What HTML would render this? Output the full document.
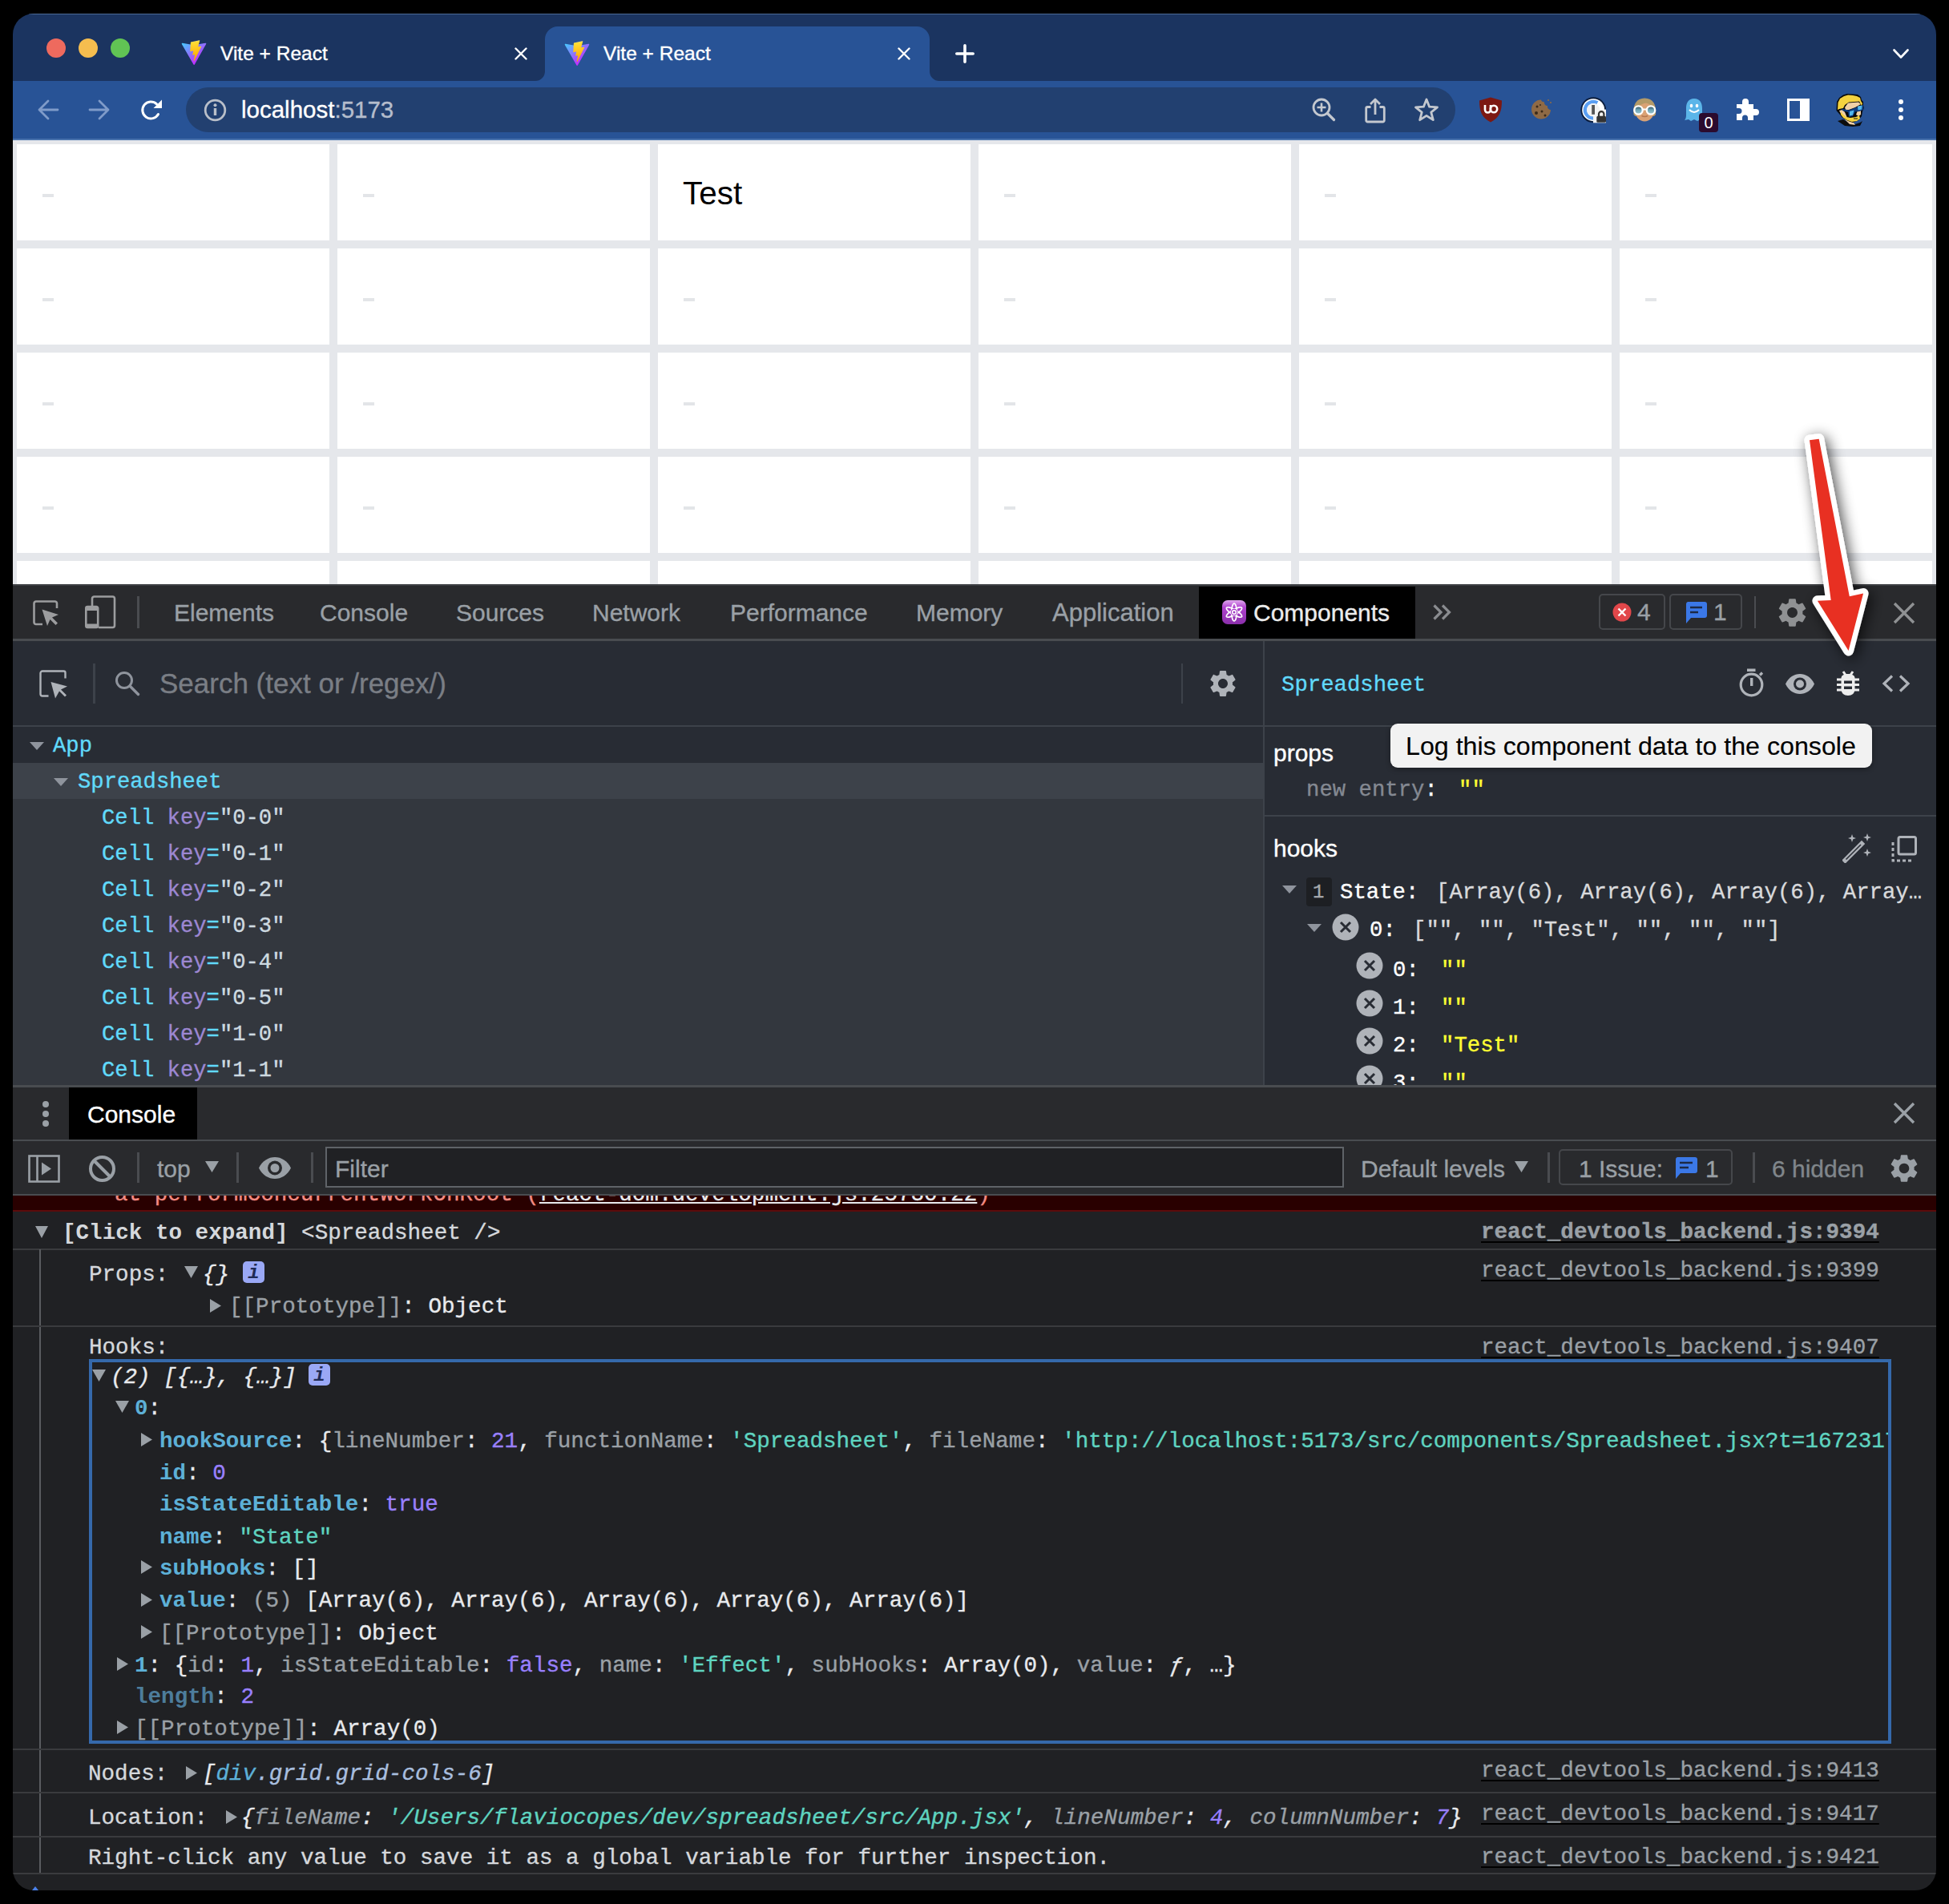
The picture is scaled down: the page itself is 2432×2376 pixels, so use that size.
<!DOCTYPE html>
<html><head><meta charset="utf-8">
<style>
html,body{margin:0;padding:0;}
body{width:2432px;height:2376px;background:#000;position:relative;overflow:hidden;font-family:"Liberation Sans",sans-serif;}
.a{position:absolute;}
#win{position:absolute;left:0;top:0;width:2432px;height:2376px;clip-path:inset(17px 16px 17px 16px round 26px);overflow:hidden;}
.mono{font-family:"Liberation Mono",monospace;}
.sans{font-family:"Liberation Sans",sans-serif;}
.nw{white-space:pre;-webkit-text-stroke:0.35px currentColor;}
b{-webkit-text-stroke-width:0;}
.ct{font-family:"Liberation Mono",monospace;font-size:27.6px;line-height:40px;height:40px;}
.dtab{top:750px;font-size:30px;line-height:30px;color:#9aa0a6;}
.tr{font-family:"Liberation Mono",monospace;font-size:27.2px;line-height:45px;height:45px;}
/* browser chrome */
#tabbar{left:16px;top:17px;width:2400px;height:84px;background:#1b3460;}
#tabtopline{left:16px;top:17px;width:2400px;height:1px;background:#4b6894;}
#toolbar{left:16px;top:101px;width:2400px;height:72px;background:#285396;}
#tbline{left:16px;top:173px;width:2400px;height:2px;background:#4a73ad;}
.tabtitle{font-size:24.5px;line-height:30px;color:#fff;}
#omni{left:232px;top:109px;width:1584px;height:56px;border-radius:28px;background:#224070;}
/* page */
#page{left:16px;top:175px;width:2400px;height:554px;background:#e5e7eb;}
.cell{position:absolute;background:#fff;width:390px;height:120px;}
.dash{position:absolute;left:32px;top:62px;width:14px;height:4px;background:#e3e5e8;}
</style></head>
<body>
<div id="win">
  <div class="a" id="tabbar"></div>
  <div class="a" id="tabtopline"></div>
  <!-- traffic lights -->
  <div class="a" style="left:58px;top:48px;width:24px;height:24px;border-radius:50%;background:#ee6a5e;"></div>
  <div class="a" style="left:98px;top:48px;width:24px;height:24px;border-radius:50%;background:#f5bd4f;"></div>
  <div class="a" style="left:138px;top:48px;width:24px;height:24px;border-radius:50%;background:#61c454;"></div>
  <!-- active tab -->
  <div class="a" style="left:680px;top:33px;width:480px;height:68px;background:#285396;border-radius:16px 16px 0 0;"></div>
  <svg class="a" style="left:668px;top:89px" width="12" height="12"><path d="M12 0 V12 H0 A12 12 0 0 0 12 0Z" fill="#285396"/></svg>
  <svg class="a" style="left:1160px;top:89px" width="12" height="12"><path d="M0 0 V12 H12 A12 12 0 0 1 0 0Z" fill="#285396"/></svg>
  <!-- vite icons -->
  <svg class="a" style="left:226px;top:50px" width="32" height="32" viewBox="0 0 410 404"><defs><linearGradient id="vg0" x1="6" y1="33" x2="235" y2="344" gradientUnits="userSpaceOnUse"><stop stop-color="#41D1FF"/><stop offset="1" stop-color="#BD34FE"/></linearGradient><linearGradient id="vg1" x1="194.65" y1="8.82" x2="236.08" y2="292.99" gradientUnits="userSpaceOnUse"><stop stop-color="#FFEA83"/><stop offset="0.083" stop-color="#FFDD35"/><stop offset="1" stop-color="#FFA800"/></linearGradient></defs><path d="M399.641 59.525L215.643 388.545C211.844 395.338 202.084 395.378 198.228 388.618L10.582 59.556C6.381 52.19 12.68 43.267 21.028 44.759L205.223 77.682C206.398 77.892 207.601 77.89 208.776 77.676L389.119 44.806C397.439 43.289 403.768 52.143 399.641 59.525Z" fill="url(#vg0)"/><path d="M292.965 1.574L156.801 28.255C154.563 28.694 152.906 30.59 152.771 32.866L144.395 174.33C144.198 177.662 147.258 180.248 150.51 179.498L188.42 170.749C191.967 169.931 195.172 173.055 194.443 176.622L183.18 231.775C182.422 235.487 185.907 238.661 189.532 237.56L212.947 230.446C216.577 229.344 220.065 232.527 219.297 236.242L201.398 322.875C200.278 328.294 207.486 331.249 210.492 326.603L212.5 323.5L323.454 102.072C325.312 98.365 322.108 94.137 318.036 94.923L279.014 102.454C275.347 103.161 272.227 99.746 273.262 96.158L298.731 7.867C299.767 4.273 296.636 0.855 292.965 1.574Z" fill="url(#vg1)"/></svg>
  <svg class="a" style="left:704px;top:51px" width="32" height="32" viewBox="0 0 410 404"><path d="M399.641 59.525L215.643 388.545C211.844 395.338 202.084 395.378 198.228 388.618L10.582 59.556C6.381 52.19 12.68 43.267 21.028 44.759L205.223 77.682C206.398 77.892 207.601 77.89 208.776 77.676L389.119 44.806C397.439 43.289 403.768 52.143 399.641 59.525Z" fill="url(#vg0)"/><path d="M292.965 1.574L156.801 28.255C154.563 28.694 152.906 30.59 152.771 32.866L144.395 174.33C144.198 177.662 147.258 180.248 150.51 179.498L188.42 170.749C191.967 169.931 195.172 173.055 194.443 176.622L183.18 231.775C182.422 235.487 185.907 238.661 189.532 237.56L212.947 230.446C216.577 229.344 220.065 232.527 219.297 236.242L201.398 322.875C200.278 328.294 207.486 331.249 210.492 326.603L212.5 323.5L323.454 102.072C325.312 98.365 322.108 94.137 318.036 94.923L279.014 102.454C275.347 103.161 272.227 99.746 273.262 96.158L298.731 7.867C299.767 4.273 296.636 0.855 292.965 1.574Z" fill="url(#vg1)"/></svg>
  <div class="a tabtitle nw" style="left:275px;top:52px;">Vite + React</div>
  <div class="a tabtitle nw" style="left:753px;top:52px;">Vite + React</div>
  <!-- close X -->
  <svg class="a" style="left:642px;top:59px" width="16" height="16"><path d="M1.5 1.5L14.5 14.5M14.5 1.5L1.5 14.5" stroke="#fff" stroke-width="2.4" stroke-linecap="round"/></svg>
  <svg class="a" style="left:1120px;top:59px" width="16" height="16"><path d="M1.5 1.5L14.5 14.5M14.5 1.5L1.5 14.5" stroke="#fff" stroke-width="2.4" stroke-linecap="round"/></svg>
  <!-- new tab + -->
  <svg class="a" style="left:1192px;top:55px" width="24" height="24"><path d="M12 1.8V22.2M1.8 12H22.2" stroke="#fff" stroke-width="3.6" stroke-linecap="round"/></svg>
  <!-- dropdown chevron -->
  <svg class="a" style="left:2362px;top:61px" width="20" height="14"><path d="M1.5 1.5L10 10.5L18.5 1.5" stroke="#fff" stroke-width="2.6" fill="none" stroke-linecap="round" stroke-linejoin="round"/></svg>

  <!-- toolbar -->
  <div class="a" id="toolbar"></div>
  <div class="a" id="tbline"></div>
  <div class="a" id="omni"></div>
  <!-- back / forward / reload -->
  <svg class="a" style="left:46px;top:123px" width="28" height="28"><path d="M26 14H3M14 3L3 14L14 25" stroke="#7f9bc9" stroke-width="2.8" fill="none" stroke-linecap="round" stroke-linejoin="round"/></svg>
  <svg class="a" style="left:110px;top:123px" width="28" height="28"><path d="M2 14H25M14 3L25 14L14 25" stroke="#7f9bc9" stroke-width="2.8" fill="none" stroke-linecap="round" stroke-linejoin="round"/></svg>
  <svg class="a" style="left:174px;top:123px" width="30" height="30"><path d="M23.5 19.5A10.5 10.5 0 1 1 21.5 6.8" stroke="#fff" stroke-width="3" fill="none" stroke-linecap="round"/><path d="M28 1.5V12H17.5Z" fill="#fff"/></svg>
  <!-- info -->
  <svg class="a" style="left:254px;top:123px" width="29" height="29"><circle cx="14.5" cy="14.5" r="12.3" stroke="#b9bfc9" stroke-width="2.8" fill="none"/><rect x="12.8" y="12" width="3.4" height="9" fill="#b9bfc9"/><circle cx="14.5" cy="8.3" r="2" fill="#b9bfc9"/></svg>
  <div class="a nw" style="left:301px;top:119px;font-size:29.5px;line-height:36px;color:#fff;">localhost<span style="color:#b5bdcc">:5173</span></div>
  <!-- zoom -->
  <svg class="a" style="left:1637px;top:122px" width="30" height="30"><circle cx="12" cy="12" r="10" stroke="#c4c8cf" stroke-width="2.8" fill="none"/><path d="M12 6.5V17.5M6.5 12H17.5" stroke="#c4c8cf" stroke-width="2.6"/><path d="M19.5 19.5L27.5 27.5" stroke="#c4c8cf" stroke-width="3.2" stroke-linecap="round"/></svg>
  <!-- share -->
  <svg class="a" style="left:1703px;top:122px" width="26" height="32"><path d="M7.5 11.5H3.5A1.8 1.8 0 0 0 1.7 13.3V28.2A1.8 1.8 0 0 0 3.5 30H22.5A1.8 1.8 0 0 0 24.3 28.2V13.3A1.8 1.8 0 0 0 22.5 11.5H18.5" stroke="#c4c8cf" stroke-width="2.8" fill="none"/><path d="M13 21V2.5M7 8L13 2L19 8" stroke="#c4c8cf" stroke-width="2.8" fill="none" stroke-linejoin="round"/></svg>
  <!-- star -->
  <svg class="a" style="left:1764px;top:121px" width="32" height="32"><path d="M16 3L19.6 12.2L29.5 12.8L21.8 19.1L24.3 28.7L16 23.3L7.7 28.7L10.2 19.1L2.5 12.8L12.4 12.2Z" stroke="#c4c8cf" stroke-width="2.8" fill="none" stroke-linejoin="round"/></svg>
  <!-- ublock -->
  <svg class="a" style="left:1845px;top:121px" width="30" height="32"><path d="M15 0.5L29 4.5C29 18 26 26 15 31.5C4 26 1 18 1 4.5Z" fill="#7c1812"/><path d="M8 10V16A3.5 3.5 0 0 0 15 16V10" stroke="#fff" stroke-width="2.6" fill="none"/><circle cx="19" cy="15" r="4.2" stroke="#fff" stroke-width="2.6" fill="none"/></svg>
  <!-- cookie -->
  <svg class="a" style="left:1909px;top:122px" width="30" height="30"><path d="M14 2.5A12 12 0 1 0 26 15A4 4 0 0 1 22 10A4 4 0 0 1 18 5A3 3 0 0 1 14 2.5Z" fill="#8f6a45"/><circle cx="9" cy="11" r="1.5" fill="#3a2a1a"/><circle cx="15" cy="17" r="1.5" fill="#3a2a1a"/><circle cx="8" cy="19" r="2" fill="#3a2a1a"/><circle cx="19" cy="22" r="1.5" fill="#3a2a1a"/><circle cx="13" cy="9" r="1" fill="#3a2a1a"/><circle cx="26" cy="6" r="1" fill="#8f6a45"/><circle cx="23" cy="3" r="1" fill="#8f6a45"/></svg>
  <!-- 1password -->
  <svg class="a" style="left:1971px;top:120px" width="35" height="35" viewBox="1971 120 35 35">
    <circle cx="1988.2" cy="137.2" r="15.9" fill="#0b1d3d"/>
    <circle cx="1988.2" cy="137.2" r="14" fill="#fff"/>
    <path d="M1993.35 128.28A10.3 10.3 0 1 0 1988.2 147.5" stroke="#5b9ff3" stroke-width="4.4" fill="none"/>
    <circle cx="1988.2" cy="137.2" r="8.1" fill="#f2f2f2"/>
    <rect x="1988" y="136.6" width="16" height="16.7" fill="#f4f4f4"/>
    <rect x="1986.2" y="131" width="3.8" height="11.8" fill="#555"/>
    <rect x="1992.3" y="144.8" width="11.7" height="8" rx="1.6" fill="#333"/>
    <path d="M1995 145.5V142.3A3.2 3.2 0 0 1 2001.4 142.3V145.5" stroke="#333" stroke-width="2.2" fill="none"/>
  </svg>
  <!-- face glasses -->
  <svg class="a" style="left:2036px;top:121px" width="33" height="33" viewBox="2036 121 33 33">
    <defs><linearGradient id="lens" x1="0" y1="0" x2="0" y2="1"><stop offset="0" stop-color="#24414d"/><stop offset="0.45" stop-color="#6fa5b5"/><stop offset="1" stop-color="#9cc8d4"/></linearGradient></defs>
    <path d="M2038.5 143C2037 131 2042 122.5 2052.2 122.5C2062.5 122.5 2067.5 131 2066 143L2064 145H2040.5Z" fill="#b39a69"/>
    <ellipse cx="2052.2" cy="140" rx="11.3" ry="11.4" fill="#d9a275"/>
    <path d="M2040.5 135C2041 127 2046 124 2052 124C2058.5 124 2063.5 127 2064 135C2061 130 2057 127.5 2054.5 127.5L2047 131Z" fill="#b39a69"/>
    <path d="M2048.5 144.5Q2052.2 146.5 2056 144.5" stroke="#b5774f" stroke-width="1.5" fill="none"/>
    <circle cx="2044.5" cy="137.5" r="5.2" fill="url(#lens)" stroke="#fff" stroke-width="2.3"/>
    <circle cx="2060" cy="137.5" r="5.2" fill="url(#lens)" stroke="#fff" stroke-width="2.3"/>
    <path d="M2049.7 136.5H2054.8" stroke="#fff" stroke-width="2.2"/>
  </svg>
  <!-- ghostery -->
  <svg class="a" style="left:2102px;top:122px" width="26" height="30"><path d="M12 1C5 1 2 6 2 13V22C2 25 1 27 0 28L5 27L8 29L12 27L16 29L20 27L24 28C23 26 22 24 22 22V13C22 6 19 1 12 1Z" fill="#5bb5e9"/><ellipse cx="8.5" cy="10" rx="1.8" ry="2.3" fill="#fff"/><ellipse cx="15.5" cy="10" rx="1.8" ry="2.3" fill="#fff"/><path d="M6 15Q12 21 18 15" stroke="#fff" stroke-width="2" fill="none"/></svg>
  <div class="a" style="left:2120px;top:141px;width:24px;height:24px;border-radius:4px;background:#2b0b2e;"></div>
  <div class="a mono" style="left:2120px;top:141px;width:24px;height:24px;line-height:24px;text-align:center;font-family:'Liberation Sans';font-size:20px;color:#fff;">0</div>
  <!-- puzzle -->
  <svg class="a" style="left:2165px;top:121px" width="31" height="30"><path d="M2 9H9V6A4 4 0 0 1 17 6V9H23V15H26A4 4 0 0 1 26 23H23V29H16V26A3.5 3.5 0 0 0 9 26V29H2V21H5A3.5 3.5 0 0 0 5 14H2Z" fill="#fff"/></svg>
  <!-- sidebar -->
  <svg class="a" style="left:2230px;top:123px" width="28" height="28"><rect x="1.5" y="1.5" width="25" height="25" stroke="#fff" stroke-width="3" fill="none"/><rect x="16" y="1" width="11" height="26" fill="#fff"/></svg>
  <!-- avatar -->
  <svg class="a" style="left:2285px;top:112px" width="50" height="50" viewBox="0 0 50 50">
    <path d="M8 39L15 37L22 41L30 43L36 41L39 39L36 45L27 46L17 45Z" fill="#0c0c0c"/>
    <path d="M17 37L23 43L30 44L28 41L20 36Z" fill="#efcfa6"/>
    <path d="M6.5 26L7 15L10 10L15 6.5L20 5L27 5.5L33 6L37 9L38 13L40 15L40 19L41 23L39 27L38 33L34 38L27 41L21 39L14 35L10 30Z" fill="#0a0a0a"/>
    <path d="M8 25L8.5 16L11 11L16 8L21 6.5L27 7L32 8L36 10L37 14L39 17L38 20L35 14.5L22 15.5L17 19L15 23L10 24Z" fill="#f4d23f"/>
    <path d="M17 22L21 16.5L34 15.5L37 18L30 22L22 25L18 25Z" fill="#efcfa6"/>
    <path d="M10 26L14 25L17 28L20 35L16 34L12 30Z" fill="#efcfa6"/>
    <path d="M33 26L37 25L37 31L34 33L31 31Z" fill="#efcfa6"/>
    <path d="M12 27L14 30L19 34L24 35L31 34L35 32L36 36L32 39L26 40L20 38L15 35L12 31Z" fill="#f4d23f"/>
    <path d="M13 23.5L22 25.5L30 22.5L40 19L40.5 25L35 27L30 27.5L27 33L22 34L21 28L14 26Z" fill="#0d3d80"/>
    <path d="M23 27L28.5 25.5L27 31.5L23 32.5Z" fill="#50b8f0"/>
    <path d="M33 20.5L38.5 19.5L38 24.5L33.5 25.5Z" fill="#50b8f0"/>
    <path d="M28 36H33" stroke="#111" stroke-width="1"/>
  </svg>
  <!-- menu dots -->
  <div class="a" style="left:2369px;top:124px;width:6px;height:6px;border-radius:50%;background:#fff;"></div>
  <div class="a" style="left:2369px;top:134px;width:6px;height:6px;border-radius:50%;background:#fff;"></div>
  <div class="a" style="left:2369px;top:144px;width:6px;height:6px;border-radius:50%;background:#fff;"></div>


  <!-- page -->
  <div class="a" id="page"></div>
  <div class="cell" style="left:21px;top:180px"><div class="dash"></div></div>
  <div class="cell" style="left:421px;top:180px"><div class="dash"></div></div>
  <div class="cell" style="left:821px;top:180px"><div class="a" style="left:31px;top:36px;font-size:40.5px;line-height:50px;color:#000;">Test</div></div>
  <div class="cell" style="left:1221px;top:180px"><div class="dash"></div></div>
  <div class="cell" style="left:1621px;top:180px"><div class="dash"></div></div>
  <div class="cell" style="left:2021px;top:180px"><div class="dash"></div></div>
  <div class="cell" style="left:21px;top:310px"><div class="dash"></div></div>
  <div class="cell" style="left:421px;top:310px"><div class="dash"></div></div>
  <div class="cell" style="left:821px;top:310px"><div class="dash"></div></div>
  <div class="cell" style="left:1221px;top:310px"><div class="dash"></div></div>
  <div class="cell" style="left:1621px;top:310px"><div class="dash"></div></div>
  <div class="cell" style="left:2021px;top:310px"><div class="dash"></div></div>
  <div class="cell" style="left:21px;top:440px"><div class="dash"></div></div>
  <div class="cell" style="left:421px;top:440px"><div class="dash"></div></div>
  <div class="cell" style="left:821px;top:440px"><div class="dash"></div></div>
  <div class="cell" style="left:1221px;top:440px"><div class="dash"></div></div>
  <div class="cell" style="left:1621px;top:440px"><div class="dash"></div></div>
  <div class="cell" style="left:2021px;top:440px"><div class="dash"></div></div>
  <div class="cell" style="left:21px;top:570px"><div class="dash"></div></div>
  <div class="cell" style="left:421px;top:570px"><div class="dash"></div></div>
  <div class="cell" style="left:821px;top:570px"><div class="dash"></div></div>
  <div class="cell" style="left:1221px;top:570px"><div class="dash"></div></div>
  <div class="cell" style="left:1621px;top:570px"><div class="dash"></div></div>
  <div class="cell" style="left:2021px;top:570px"><div class="dash"></div></div>
  <div class="cell" style="left:21px;top:700px"><div class="dash"></div></div>
  <div class="cell" style="left:421px;top:700px"><div class="dash"></div></div>
  <div class="cell" style="left:821px;top:700px"><div class="dash"></div></div>
  <div class="cell" style="left:1221px;top:700px"><div class="dash"></div></div>
  <div class="cell" style="left:1621px;top:700px"><div class="dash"></div></div>
  <div class="cell" style="left:2021px;top:700px"><div class="dash"></div></div>

  <!-- ===== DEVTOOLS main toolbar ===== -->
  <div class="a" style="left:16px;top:729px;width:2400px;height:2px;background:#3c3e42;"></div>
  <div class="a" style="left:16px;top:731px;width:2400px;height:66px;background:#292a2d;"></div>
  <div class="a" style="left:16px;top:797px;width:2400px;height:3px;background:#494c50;"></div>
  <!-- inspect icon -->
  <svg class="a" style="left:40px;top:748px" width="36" height="36"><path d="M13 31H5A2.5 2.5 0 0 1 2.5 28.5V5A2.5 2.5 0 0 1 5 2.5H28.5A2.5 2.5 0 0 1 31 5V11" stroke="#9c9d9f" stroke-width="2.6" fill="none"/><path d="M12.5 12.5L33 19L25 22.5L32 29.5L29.5 32L22.5 25L19 33Z" fill="#9c9d9f"/></svg>
  <!-- device icon -->
  <svg class="a" style="left:105px;top:743px" width="40" height="42"><path d="M10 15V4A2.5 2.5 0 0 1 12.5 1.5H35.5A2.5 2.5 0 0 1 38 4V37.5A2.5 2.5 0 0 1 35.5 40H18" stroke="#9c9d9f" stroke-width="2.6" fill="none"/><path d="M4.3 14H15.2A2 2 0 0 1 17.2 16V38A2 2 0 0 1 15.2 40H4.3A2 2 0 0 1 2.3 38V16A2 2 0 0 1 4.3 14Z" stroke="#9c9d9f" stroke-width="2.6" fill="none"/><rect x="2.3" y="14" width="14.9" height="5" fill="#9c9d9f"/><rect x="2.3" y="35.5" width="14.9" height="4.5" fill="#9c9d9f"/></svg>
  <div class="a" style="left:171px;top:744px;width:3px;height:40px;background:#4a4c50;"></div>
  <div class="a nw dtab" style="left:217px;">Elements</div>
  <div class="a nw dtab" style="left:399px;">Console</div>
  <div class="a nw dtab" style="left:569px;">Sources</div>
  <div class="a nw dtab" style="left:739px;">Network</div>
  <div class="a nw dtab" style="left:911px;">Performance</div>
  <div class="a nw dtab" style="left:1143px;">Memory</div>
  <div class="a nw dtab" style="left:1313px;font-size:31px;">Application</div>
  <div class="a" style="left:1496px;top:732px;width:270px;height:65px;background:#000;"></div>
  <svg class="a" style="left:1525px;top:749px" width="30" height="30"><defs><linearGradient id="atg" x1="0" y1="0" x2="0" y2="1"><stop offset="0" stop-color="#e0a8ee"/><stop offset="0.3" stop-color="#b043cf"/><stop offset="1" stop-color="#8a2faa"/></linearGradient></defs><rect x="0" y="0" width="30" height="30" rx="7" fill="url(#atg)"/><g stroke="#fff" stroke-width="1.7" fill="none"><ellipse cx="15" cy="15" rx="11" ry="3.3" transform="rotate(90 15 15)"/><ellipse cx="15" cy="15" rx="11" ry="3.3" transform="rotate(30 15 15)"/><ellipse cx="15" cy="15" rx="11" ry="3.3" transform="rotate(-30 15 15)"/></g><circle cx="15" cy="15" r="4.2" fill="#a23cc4"/><circle cx="15" cy="15" r="2.3" stroke="#fff" stroke-width="1.6" fill="none"/></svg>
  <div class="a nw dtab" style="left:1564px;color:#ececec;">Components</div>
  <svg class="a" style="left:1787px;top:753px" width="26" height="22"><path d="M2.5 2.5L11 11L2.5 19.5M13 2.5L21.5 11L13 19.5" stroke="#8a8c90" stroke-width="3.2" fill="none"/></svg>
  <!-- error / message badges -->
  <div class="a" style="left:1995px;top:741px;width:79px;height:41px;border:2px solid #45474b;border-radius:5px;"></div>
  <svg class="a" style="left:2012px;top:752px" width="24" height="24"><circle cx="12" cy="12" r="11.5" fill="#e2474a"/><path d="M7.5 7.5L16.5 16.5M16.5 7.5L7.5 16.5" stroke="#fff" stroke-width="2.4"/></svg>
  <div class="a nw sans" style="left:2043px;top:749px;font-size:30px;line-height:30px;color:#9aa0a6;">4</div>
  <div class="a" style="left:2083px;top:741px;width:87px;height:41px;border:2px solid #45474b;border-radius:5px;"></div>
  <svg class="a" style="left:2102px;top:750px" width="29" height="29"><path d="M4 1H25A3 3 0 0 1 28 4V18A3 3 0 0 1 25 21H8L2 28V4A3 3 0 0 1 4 1Z" fill="#3b78e7"/><path d="M7 8H22M7 14H17" stroke="#1c2a46" stroke-width="2.6"/></svg>
  <div class="a nw sans" style="left:2138px;top:749px;font-size:30px;line-height:30px;color:#9aa0a6;">1</div>
  <div class="a" style="left:2189px;top:744px;width:2px;height:40px;background:#4a4c50;"></div>
  <svg class="a" style="left:2214.5px;top:742.5px" width="43" height="43" viewBox="0 0 24 24"><path fill="#8f9193" d="M19.14 12.94c.04-.3.06-.61.06-.94 0-.32-.02-.64-.07-.94l2.03-1.58a.49.49 0 0 0 .12-.61l-1.92-3.32a.488.488 0 0 0-.59-.22l-2.39.96c-.5-.38-1.03-.7-1.62-.94l-.36-2.54a.484.484 0 0 0-.48-.41h-3.84c-.24 0-.43.17-.47.41l-.36 2.54c-.59.24-1.13.57-1.62.94l-2.39-.96c-.22-.08-.47 0-.59.22L2.74 8.87c-.12.21-.08.47.12.61l2.03 1.58c-.05.3-.09.63-.09.94s.02.64.07.94l-2.03 1.58a.49.49 0 0 0-.12.61l1.92 3.32c.12.22.37.29.59.22l2.39-.96c.5.38 1.03.7 1.62.94l.36 2.54c.05.24.24.41.48.41h3.84c.24 0 .44-.17.47-.41l.36-2.54c.59-.24 1.13-.56 1.62-.94l2.39.96c.22.08.47 0 .59-.22l1.92-3.32c.12-.22.07-.47-.12-.61l-2.01-1.58zM12 15.6c-1.98 0-3.6-1.62-3.6-3.6s1.62-3.6 3.6-3.6 3.6 1.62 3.6 3.6-1.62 3.6-3.6 3.6z"/></svg>
  <svg class="a" style="left:2362px;top:751px" width="28" height="28"><path d="M2 2L26 26M26 2L2 26" stroke="#8f9193" stroke-width="3.4"/></svg>

  <!-- ===== React Components panel ===== -->
  <div class="a" style="left:16px;top:800px;width:2400px;height:555px;background:#282c34;"></div>
  <div class="a" style="left:16px;top:905px;width:2400px;height:2px;background:#3d424a;"></div>
  <div class="a" style="left:1576px;top:800px;width:2px;height:555px;background:#3d424a;"></div>
  <!-- tree bg -->
  <div class="a" style="left:16px;top:952px;width:1560px;height:45px;background:#3d424a;"></div>
  <div class="a" style="left:16px;top:997px;width:1560px;height:358px;background:#33373e;"></div>
  <svg class="a" style="left:48px;top:835px" width="38" height="38"><path d="M12.5 33.5H5A2.5 2.5 0 0 1 2.5 31V5A2.5 2.5 0 0 1 5 2.5H31.5A2 2 0 0 1 33.5 4.5V11.5" stroke="#afb3b9" stroke-width="2.4" fill="none"/><path d="M15.5 16L36 21.5L28 25.5L35 32.5L33 34.5L26 27.5L21 36.5Z" fill="#afb3b9"/></svg>
  <div class="a" style="left:116px;top:828px;width:3px;height:50px;background:#3d424a;"></div>
  <svg class="a" style="left:143px;top:837px" width="32" height="32"><circle cx="12" cy="12" r="9.5" stroke="#8f949d" stroke-width="3" fill="none"/><path d="M19 19L29.5 29.5" stroke="#8f949d" stroke-width="3.4" stroke-linecap="round"/></svg>
  <div class="a nw sans" style="left:199px;top:835px;font-size:35px;line-height:35px;color:#7a7e85;">Search (text or /regex/)</div>
  <div class="a" style="left:1474px;top:828px;width:2px;height:50px;background:#3d424a;"></div>
  <svg class="a" style="left:1506px;top:833px" width="40" height="40" viewBox="0 0 24 24"><path fill="#afb3b9" d="M19.14 12.94c.04-.3.06-.61.06-.94 0-.32-.02-.64-.07-.94l2.03-1.58a.49.49 0 0 0 .12-.61l-1.92-3.32a.488.488 0 0 0-.59-.22l-2.39.96c-.5-.38-1.03-.7-1.62-.94l-.36-2.54a.484.484 0 0 0-.48-.41h-3.84c-.24 0-.43.17-.47.41l-.36 2.54c-.59.24-1.130.57-1.62.94l-2.39-.96c-.22-.08-.47 0-.59.22L2.74 8.870c-.12.21-.08.47.12.61l2.03 1.58c-.05.3-.09.63-.09.94s.02.64.07.94l-2.03 1.58a.49.49 0 0 0-.12.61l1.92 3.32c.12.22.37.29.59.22l2.39-.96c.5.38 1.03.7 1.620.94l.36 2.54c.05.24.24.41.48.41h3.84c.24 0 .44-.17.47-.41l.36-2.54c.59-.24 1.13-.56 1.62-.94l2.39.96c.22.08.47 0 .59-.22l1.92-3.32c.12-.22.07-.47-.12-.61l-2.01-1.58zM12 15.6c-1.98 0-3.6-1.620-3.6-3.6s1.62-3.6 3.6-3.6 3.6 1.62 3.6 3.6-1.62 3.6-3.6 3.6z"/></svg>
  <!-- tree rows -->
  <svg class="a" style="left:36px;top:925px" width="20" height="12"><path d="M1 1H19L10 11Z" fill="#8f949d"/></svg>
  <div class="a nw tr" style="left:66px;top:908px;color:#61dafb;">App</div>
  <svg class="a" style="left:66px;top:970px" width="20" height="12"><path d="M1 1H19L10 11Z" fill="#8f949d"/></svg>
  <div class="a nw tr" style="left:97px;top:953px;color:#61dafb;">Spreadsheet</div>
  <div class="a nw tr" style="left:127px;top:998px;"><span style="color:#61dafb">Cell</span> <span style="color:#9d87d2">key</span><span style="color:#61dafb">=</span><span style="color:#cedae0">"0-0"</span></div>
  <div class="a nw tr" style="left:127px;top:1043px;"><span style="color:#61dafb">Cell</span> <span style="color:#9d87d2">key</span><span style="color:#61dafb">=</span><span style="color:#cedae0">"0-1"</span></div>
  <div class="a nw tr" style="left:127px;top:1088px;"><span style="color:#61dafb">Cell</span> <span style="color:#9d87d2">key</span><span style="color:#61dafb">=</span><span style="color:#cedae0">"0-2"</span></div>
  <div class="a nw tr" style="left:127px;top:1133px;"><span style="color:#61dafb">Cell</span> <span style="color:#9d87d2">key</span><span style="color:#61dafb">=</span><span style="color:#cedae0">"0-3"</span></div>
  <div class="a nw tr" style="left:127px;top:1178px;"><span style="color:#61dafb">Cell</span> <span style="color:#9d87d2">key</span><span style="color:#61dafb">=</span><span style="color:#cedae0">"0-4"</span></div>
  <div class="a nw tr" style="left:127px;top:1223px;"><span style="color:#61dafb">Cell</span> <span style="color:#9d87d2">key</span><span style="color:#61dafb">=</span><span style="color:#cedae0">"0-5"</span></div>
  <div class="a nw tr" style="left:127px;top:1268px;"><span style="color:#61dafb">Cell</span> <span style="color:#9d87d2">key</span><span style="color:#61dafb">=</span><span style="color:#cedae0">"1-0"</span></div>
  <div class="a nw tr" style="left:127px;top:1313px;"><span style="color:#61dafb">Cell</span> <span style="color:#9d87d2">key</span><span style="color:#61dafb">=</span><span style="color:#cedae0">"1-1"</span></div>

  <!-- right panel header -->
  <div class="a nw tr" style="left:1599px;top:832px;color:#61dafb;font-size:27.3px;">Spreadsheet</div>
  <svg class="a" style="left:2169px;top:833px" width="36" height="38"><rect x="11" y="1.5" width="10.5" height="3.5" fill="#afb3b9"/><circle cx="16.5" cy="21.5" r="13.3" stroke="#afb3b9" stroke-width="3.2" fill="none"/><rect x="15" y="13" width="3.4" height="10" fill="#afb3b9"/><path d="M27 9.5L30 6.5" stroke="#afb3b9" stroke-width="3.2"/></svg>
  <svg class="a" style="left:2227px;top:840px" width="38" height="27"><path d="M1 13.5C5 5 12 1 19 1C26 1 33 5 37 13.5C33 22 26 26 19 26C12 26 5 22 1 13.5Z" fill="#afb3b9"/><circle cx="19" cy="13.5" r="8" fill="#282c34"/><circle cx="19" cy="13.5" r="5" fill="#afb3b9"/></svg>
  <svg class="a" style="left:2291px;top:837px" width="30" height="32"><path d="M9 1L12 5.5H18L21 1" stroke="#ededed" stroke-width="3" fill="none"/><path d="M6.5 9C6.5 6 10 4 15 4C20 4 23.5 6 23.5 9V23C23.5 28 20 31 15 31C10 31 6.5 28 6.5 23Z" fill="#ededed"/><path d="M1 11H29M1 17.5H29M1 24H29" stroke="#ededed" stroke-width="3"/><rect x="10" y="12.5" width="10" height="3.5" fill="#282c34"/><rect x="10" y="19.5" width="10" height="3.5" fill="#282c34"/></svg>
  <svg class="a" style="left:2348px;top:842px" width="36" height="22"><path d="M13 1.5L3 11L13 20.5M23 1.5L33 11L23 20.5" stroke="#afb3b9" stroke-width="3.2" fill="none"/></svg>
  <!-- props -->
  <div class="a nw sans" style="left:1589px;top:925px;font-size:30px;line-height:30px;color:#fff;">props</div>
  <div class="a nw tr" style="left:1630px;top:963px;font-size:27.3px;"><span style="color:#848992">new entry</span><span style="color:#fff">:</span></div><div class="a nw tr" style="left:1820px;top:963px;font-size:27.3px;color:#ffff33;">""</div>
  <div class="a" style="left:1578px;top:1017px;width:838px;height:2px;background:#3d424a;"></div>
  <div class="a nw sans" style="left:1589px;top:1044px;font-size:30px;line-height:30px;color:#fff;">hooks</div>
  <svg class="a" style="left:2299px;top:1039px" width="38" height="38"><path d="M3.5 34.5L24 14" stroke="#afb3b9" stroke-width="6" stroke-linecap="square"/><path d="M4.5 33.5L23 15" stroke="#282c34" stroke-width="1.6"/><path d="M12 2L13.3 5.7L17 7L13.3 8.3L12 12L10.7 8.3L7 7L10.7 5.7Z M31 1L32.3 4.7L36 6L32.3 7.3L31 11L29.7 7.3L26 6L29.7 4.7Z M31 20L32.3 23.7L36 25L32.3 26.3L31 30L29.7 26.3L26 25L29.7 23.7Z" fill="#afb3b9"/></svg>
  <svg class="a" style="left:2360px;top:1043px" width="33" height="33"><rect x="9" y="1.5" width="21.5" height="21.5" rx="2" stroke="#afb3b9" stroke-width="3" fill="none"/><path d="M2 8V12M2 15V19M2 22V26M2 29V31H4M7 31H11M14 31H18M21 31H25" stroke="#afb3b9" stroke-width="3"/></svg>
  <!-- hooks tree -->
  <svg class="a" style="left:1599px;top:1104px" width="20" height="12"><path d="M1 1H19L10 11Z" fill="#8f949d"/></svg>
  <div class="a" style="left:1630px;top:1095px;width:32px;height:36px;border-radius:4px;background:#1d1f23;"></div>
  <div class="a nw tr" style="left:1638px;top:1091px;font-size:24px;color:#a6a9ae;">1</div>
  <div class="a nw tr" style="left:1672px;top:1091px;font-size:27.3px;color:#fff;">State:</div><div class="a nw tr" style="left:1792px;top:1091px;font-size:27.3px;color:#d9dadc;">[Array(6), Array(6), Array(6), Array…</div>
  <svg class="a" style="left:1630px;top:1152px" width="20" height="12"><path d="M1 1H19L10 11Z" fill="#8f949d"/></svg>
  <svg class="a" style="left:1662px;top:1140px" width="34" height="34"><circle cx="17" cy="17" r="16.5" fill="#afb3b9"/><path d="M11 11L23 23M23 11L11 23" stroke="#282c34" stroke-width="3"/></svg>
  <div class="a nw tr" style="left:1709px;top:1138px;font-size:27.3px;color:#fff;">0:</div><div class="a nw tr" style="left:1763px;top:1138px;font-size:27.3px;color:#d9dadc;">["", "", "Test", "", "", ""]</div>
  <svg class="a" style="left:1692px;top:1188px" width="34" height="34"><circle cx="17" cy="17" r="16.5" fill="#afb3b9"/><path d="M11 11L23 23M23 11L11 23" stroke="#282c34" stroke-width="3"/></svg>
  <div class="a nw tr" style="left:1738px;top:1187.5px;font-size:27.3px;color:#fff;">0:</div><div class="a nw tr" style="left:1798px;top:1187.5px;font-size:27.3px;color:#ffff33;">""</div>
  <svg class="a" style="left:1692px;top:1235px" width="34" height="34"><circle cx="17" cy="17" r="16.5" fill="#afb3b9"/><path d="M11 11L23 23M23 11L11 23" stroke="#282c34" stroke-width="3"/></svg>
  <div class="a nw tr" style="left:1738px;top:1234.5px;font-size:27.3px;color:#fff;">1:</div><div class="a nw tr" style="left:1798px;top:1234.5px;font-size:27.3px;color:#ffff33;">""</div>
  <svg class="a" style="left:1692px;top:1282px" width="34" height="34"><circle cx="17" cy="17" r="16.5" fill="#afb3b9"/><path d="M11 11L23 23M23 11L11 23" stroke="#282c34" stroke-width="3"/></svg>
  <div class="a nw tr" style="left:1738px;top:1281.5px;font-size:27.3px;color:#fff;">2:</div><div class="a nw tr" style="left:1798px;top:1281.5px;font-size:27.3px;color:#ffff33;">"Test"</div>
  <svg class="a" style="left:1692px;top:1329px" width="34" height="34"><circle cx="17" cy="17" r="16.5" fill="#afb3b9"/><path d="M11 11L23 23M23 11L11 23" stroke="#282c34" stroke-width="3"/></svg>
  <div class="a nw tr" style="left:1738px;top:1328.5px;font-size:27.3px;color:#fff;">3:</div><div class="a nw tr" style="left:1798px;top:1328.5px;font-size:27.3px;color:#ffff33;">""</div>
  <!-- tooltip -->
  <div class="a" style="left:1735px;top:903px;width:601px;height:55px;border-radius:9px;background:#f2f2f2;box-shadow:0 2px 6px rgba(0,0,0,0.35);"></div>
  <div class="a nw sans" style="left:1754px;top:915px;font-size:32.2px;line-height:32px;color:#000;-webkit-text-stroke-width:0.15px;">Log this component data to the console</div>

  <!-- ===== Drawer ===== -->
  <div class="a" style="left:16px;top:1354px;width:2400px;height:3px;background:#494c50;"></div>
  <div class="a" style="left:16px;top:1357px;width:2400px;height:65px;background:#292a2d;"></div>
  <div class="a" style="left:16px;top:1422px;width:2400px;height:2px;background:#494c50;"></div>
  <div class="a" style="left:16px;top:1424px;width:2400px;height:66px;background:#292a2d;"></div>
  <div class="a" style="left:16px;top:1490px;width:2400px;height:2px;background:#494c50;"></div>
  <div class="a" style="left:53px;top:1374px;width:8px;height:8px;border-radius:50%;background:#9aa0a6;"></div>
  <div class="a" style="left:53px;top:1386px;width:8px;height:8px;border-radius:50%;background:#9aa0a6;"></div>
  <div class="a" style="left:53px;top:1398px;width:8px;height:8px;border-radius:50%;background:#9aa0a6;"></div>
  <div class="a" style="left:86px;top:1357px;width:160px;height:65px;background:#000;"></div>
  <div class="a nw sans" style="left:109px;top:1376px;font-size:30px;line-height:30px;color:#fff;">Console</div>
  <svg class="a" style="left:2362px;top:1375px" width="28" height="28"><path d="M2 2L26 26M26 2L2 26" stroke="#9aa0a6" stroke-width="3.4"/></svg>
  <!-- console toolbar -->
  <svg class="a" style="left:35px;top:1441px" width="40" height="35"><rect x="1.5" y="1.5" width="37" height="32" stroke="#9aa0a6" stroke-width="2.6" fill="none"/><path d="M11.5 1.5V33.5" stroke="#9aa0a6" stroke-width="2.6"/><path d="M17 9.5L29 17.5L17 25.5Z" fill="#9aa0a6"/></svg>
  <svg class="a" style="left:110px;top:1441px" width="35" height="35"><circle cx="17.5" cy="17.5" r="14.5" stroke="#9aa0a6" stroke-width="4" fill="none"/><path d="M7.5 7.5L27.5 27.5" stroke="#9aa0a6" stroke-width="4"/></svg>
  <div class="a" style="left:171px;top:1438px;width:3px;height:38px;background:#4a4c50;"></div>
  <div class="a nw sans" style="left:196px;top:1443.5px;font-size:30px;line-height:30px;color:#9aa0a6;">top</div>
  <svg class="a" style="left:255px;top:1448px" width="19" height="16"><path d="M1 1H18L9.5 15Z" fill="#9aa0a6"/></svg>
  <div class="a" style="left:295px;top:1438px;width:3px;height:38px;background:#4a4c50;"></div>
  <svg class="a" style="left:322px;top:1443px" width="42" height="29"><path d="M1 14.5C5.5 5.5 13 1 21 1C29 1 36.5 5.5 41 14.5C36.5 23.5 29 28 21 28C13 28 5.5 23.5 1 14.5Z" fill="#9aa0a6"/><circle cx="21" cy="14.5" r="9" fill="#292a2d"/><circle cx="21" cy="14.5" r="5.5" fill="#9aa0a6"/></svg>
  <div class="a" style="left:388px;top:1438px;width:3px;height:38px;background:#4a4c50;"></div>
  <div class="a" style="left:406px;top:1431px;width:1267px;height:47px;border:2px solid #5f6368;background:#202124;"></div>
  <div class="a nw sans" style="left:418px;top:1443.5px;font-size:30px;line-height:30px;color:#9aa0a6;">Filter</div>
  <div class="a nw sans" style="left:1698px;top:1443.5px;font-size:30px;line-height:30px;color:#9aa0a6;">Default levels</div>
  <svg class="a" style="left:1889px;top:1448px" width="19" height="16"><path d="M1 1H18L9.5 15Z" fill="#9aa0a6"/></svg>
  <div class="a" style="left:1931px;top:1438px;width:3px;height:38px;background:#4a4c50;"></div>
  <div class="a" style="left:1945px;top:1434px;width:213px;height:41px;border:2px solid #45474b;border-radius:5px;"></div>
  <div class="a nw sans" style="left:1970px;top:1443.5px;font-size:30px;line-height:30px;color:#9aa0a6;">1 Issue:</div>
  <svg class="a" style="left:2089px;top:1443px" width="30" height="29"><path d="M4 1H26A3 3 0 0 1 29 4V18A3 3 0 0 1 26 21H8L2 28V4A3 3 0 0 1 4 1Z" fill="#3b78e7"/><path d="M7 8H23M7 14H18" stroke="#1c2a46" stroke-width="2.6"/></svg>
  <div class="a nw sans" style="left:2128px;top:1443.5px;font-size:30px;line-height:30px;color:#9aa0a6;">1</div>
  <div class="a" style="left:2187px;top:1438px;width:3px;height:38px;background:#4a4c50;"></div>
  <div class="a nw sans" style="left:2211px;top:1443.5px;font-size:30px;line-height:30px;color:#80868b;">6 hidden</div>
  <svg class="a" style="left:2355px;top:1436.5px" width="42" height="42" viewBox="0 0 24 24"><path fill="#9aa0a6" d="M19.14 12.94c.04-.3.06-.61.06-.94 0-.32-.02-.64-.07-.94l2.03-1.58a.49.49 0 0 0 .12-.61l-1.92-3.32a.488.488 0 0 0-.59-.22l-2.39.96c-.5-.38-1.03-.7-1.62-.94l-.36-2.54a.484.484 0 0 0-.48-.41h-3.840c-.24 0-.43.17-.47.41l-.36 2.54c-.59.24-1.13.57-1.62.94l-2.39-.96c-.22-.08-.47 0-.59.22L2.74 8.87c-.12.21-.08.47.12.61l2.03 1.58c-.05.3-.09.63-.09.94s.02.64.07.94l-2.03 1.58a.49.49 0 0 0-.12.61l1.92 3.32c.12.22.37.29.59.22l2.39-.96c.5.38 1.03.7 1.62.94l.36 2.54c.05.24.24.41.48.41h3.84c.24 0 .44-.17.47-.41l.36-2.54c.59-.24 1.13-.56 1.62-.94l2.39.96c.22.08.47 0 .59-.22l1.92-3.32c.12-.22.07-.47-.12-.61l-2.01-1.58zM12 15.6c-1.98 0-3.6-1.62-3.6-3.6s1.62-3.6 3.6-3.6 3.6 1.62 3.6 3.6-1.62 3.6-3.6 3.6z"/></svg>
  <!-- CONSOLE -->
  <div class="a" style="left:16px;top:1492px;width:2400px;height:870px;background:#202124;"></div>
  <div class="a" style="left:16px;top:1492px;width:2400px;height:18px;background:#290000;overflow:hidden;">
    <div class="a nw ct" style="left:127px;top:-20.8px;color:#f28b82;">at performConcurrentWorkOnRoot (<span style="color:#e8eaed;text-decoration:underline">react-dom.development.js:25730:22</span>)</div>
  </div>
  <div class="a" style="left:16px;top:1510px;width:2400px;height:2px;background:#5c0c0c;"></div>
  <svg class="a" style="left:44px;top:1530.0px" width="16" height="15"><path d="M0 0H16L8.0 15Z" fill="#9aa0a6"/></svg>
  <div class="a nw ct" style="left:78px;top:1519.2px;"><span style="color:#d5d8dc"><b>[Click to expand]</b> &lt;Spreadsheet /&gt;</span></div>
  <div class="a nw ct" style="left:1848px;top:1517.7px;text-decoration:underline;text-underline-offset:4px;font-weight:bold;"><span style="color:#9aa0a6">react_devtools_backend.js:9394</span></div>
  <div class="a" style="left:16px;top:1558px;width:2400px;height:2px;background:#3a3b3e;"></div>
  <div class="a" style="left:49px;top:1559px;width:2px;height:779px;background:#5a5c60;"></div>
  <div class="a nw ct" style="left:111px;top:1571.2px;"><span style="color:#d5d8dc">Props:</span></div>
  <svg class="a" style="left:230px;top:1579.5px" width="17" height="15"><path d="M0 0H17L8.5 15Z" fill="#9aa0a6"/></svg>
  <div class="a nw ct" style="left:253px;top:1571.2px;"><span style="color:#e8eaed"><i>{}</i></span></div>
  <div class="a" style="left:303px;top:1574px;width:27px;height:27px;border-radius:5px;background:#9aa8f5;"></div><div class="a mono" style="left:303px;top:1574px;width:27px;height:27px;line-height:29px;text-align:center;font-size:24px;font-style:italic;font-weight:bold;color:#1f2a55;">i</div>
  <div class="a nw ct" style="left:1848px;top:1566.2px;text-decoration:underline;text-underline-offset:4px;"><span style="color:#9aa0a6">react_devtools_backend.js:9399</span></div>
  <svg class="a" style="left:262px;top:1620.5px" width="14" height="17"><path d="M0 0L14 8.5L0 17Z" fill="#9aa0a6"/></svg>
  <div class="a nw ct" style="left:286px;top:1610.7px;"><span style="color:#9aa0a6">[[Prototype]]</span><span style="color:#e8eaed">: Object</span></div>
  <div class="a" style="left:16px;top:1654px;width:2400px;height:2px;background:#3a3b3e;"></div>
  <div class="a nw ct" style="left:111px;top:1661.7px;"><span style="color:#d5d8dc">Hooks:</span></div>
  <div class="a nw ct" style="left:1848px;top:1661.7px;text-decoration:underline;text-underline-offset:4px;"><span style="color:#9aa0a6">react_devtools_backend.js:9407</span></div>
  <div class="a" style="left:111px;top:1696px;width:2241px;height:472px;border:4px solid #3569ab;overflow:hidden;">
    <svg class="a" style="left:0px;top:8.5px" width="17" height="15"><path d="M0 0H17L8.5 15Z" fill="#9aa0a6"/></svg>
    <div class="a nw ct" style="left:23px;top:-0.8px;"><span style="color:#e8eaed"><i>(2) [{…}, {…}]</i></span></div>
    <div class="a" style="left:270px;top:2px;width:27px;height:27px;border-radius:5px;background:#9aa8f5;"></div><div class="a mono" style="left:270px;top:2px;width:27px;height:27px;line-height:29px;text-align:center;font-size:24px;font-style:italic;font-weight:bold;color:#1f2a55;">i</div>
    <svg class="a" style="left:29px;top:47.5px" width="17" height="15"><path d="M0 0H17L8.5 15Z" fill="#9aa0a6"/></svg>
    <div class="a nw ct" style="left:53px;top:38.3px;"><span style="color:#5db0d7"><b>0</b></span><span style="color:#e8eaed">:</span></div>
    <svg class="a" style="left:61px;top:87.5px" width="14" height="17"><path d="M0 0L14 8.5L0 17Z" fill="#9aa0a6"/></svg>
    <div class="a nw ct" style="left:84px;top:78.7px;"><span style="color:#5db0d7"><b>hookSource</b></span><span style="color:#e8eaed">: {</span><span style="color:#9aa0a6">lineNumber</span><span style="color:#e8eaed">: </span><span style="color:#9980ff">21</span><span style="color:#e8eaed">, </span><span style="color:#9aa0a6">functionName</span><span style="color:#e8eaed">: </span><span style="color:#5fd4c0">'Spreadsheet'</span><span style="color:#e8eaed">, </span><span style="color:#9aa0a6">fileName</span><span style="color:#e8eaed">: </span><span style="color:#5fd4c0">'http://localhost:5173/src/components/Spreadsheet.jsx?t=1672317000000'</span></div>
    <div class="a nw ct" style="left:84px;top:118.5px;"><span style="color:#5db0d7"><b>id</b></span><span style="color:#e8eaed">: </span><span style="color:#9980ff">0</span></div>
    <div class="a nw ct" style="left:84px;top:157.7px;"><span style="color:#5db0d7"><b>isStateEditable</b></span><span style="color:#e8eaed">: </span><span style="color:#9980ff">true</span></div>
    <div class="a nw ct" style="left:84px;top:198.7px;"><span style="color:#5db0d7"><b>name</b></span><span style="color:#e8eaed">: </span><span style="color:#5fd4c0">"State"</span></div>
    <svg class="a" style="left:61px;top:247.0px" width="14" height="17"><path d="M0 0L14 8.5L0 17Z" fill="#9aa0a6"/></svg>
    <div class="a nw ct" style="left:84px;top:238.1px;"><span style="color:#5db0d7"><b>subHooks</b></span><span style="color:#e8eaed">: []</span></div>
    <svg class="a" style="left:61px;top:287.5px" width="14" height="17"><path d="M0 0L14 8.5L0 17Z" fill="#9aa0a6"/></svg>
    <div class="a nw ct" style="left:84px;top:278.4px;"><span style="color:#5db0d7"><b>value</b></span><span style="color:#e8eaed">: </span><span style="color:#9aa0a6">(5)</span><span style="color:#e8eaed"> [Array(6), Array(6), Array(6), Array(6), Array(6)]</span></div>
    <svg class="a" style="left:61px;top:327.5px" width="14" height="17"><path d="M0 0L14 8.5L0 17Z" fill="#9aa0a6"/></svg>
    <div class="a nw ct" style="left:84px;top:318.7px;"><span style="color:#9aa0a6">[[Prototype]]</span><span style="color:#e8eaed">: Object</span></div>
    <svg class="a" style="left:31px;top:367.5px" width="14" height="17"><path d="M0 0L14 8.5L0 17Z" fill="#9aa0a6"/></svg>
    <div class="a nw ct" style="left:53px;top:358.5px;"><span style="color:#5db0d7"><b>1</b></span><span style="color:#e8eaed">: {</span><span style="color:#9aa0a6">id</span><span style="color:#e8eaed">: </span><span style="color:#9980ff">1</span><span style="color:#e8eaed">, </span><span style="color:#9aa0a6">isStateEditable</span><span style="color:#e8eaed">: </span><span style="color:#9980ff">false</span><span style="color:#e8eaed">, </span><span style="color:#9aa0a6">name</span><span style="color:#e8eaed">: </span><span style="color:#5fd4c0">'Effect'</span><span style="color:#e8eaed">, </span><span style="color:#9aa0a6">subHooks</span><span style="color:#e8eaed">: Array(0), </span><span style="color:#9aa0a6">value</span><span style="color:#e8eaed">: <i>ƒ</i>, …}</span></div>
    <div class="a nw ct" style="left:53px;top:397.7px;"><span style="color:#4d7d9c"><b>length</b></span><span style="color:#e8eaed">: </span><span style="color:#9980ff">2</span></div>
    <svg class="a" style="left:31px;top:447.0px" width="14" height="17"><path d="M0 0L14 8.5L0 17Z" fill="#9aa0a6"/></svg>
    <div class="a nw ct" style="left:53px;top:437.5px;"><span style="color:#9aa0a6">[[Prototype]]</span><span style="color:#e8eaed">: Array(0)</span></div>
  </div>
  <div class="a" style="left:16px;top:2182px;width:2400px;height:2px;background:#3a3b3e;"></div>
  <div class="a nw ct" style="left:110px;top:2193.7px;"><span style="color:#d5d8dc">Nodes:</span></div>
  <svg class="a" style="left:232px;top:2203.5px" width="14" height="17"><path d="M0 0L14 8.5L0 17Z" fill="#9aa0a6"/></svg>
  <div class="a nw ct" style="left:253px;top:2193.7px;"><i><span style="color:#e8eaed">[</span><span style="color:#5db0d7">div</span><span style="color:#a8bedf">.grid.grid-cols-6</span><span style="color:#e8eaed">]</span></i></div>
  <div class="a nw ct" style="left:1848px;top:2189.7px;text-decoration:underline;text-underline-offset:4px;"><span style="color:#9aa0a6">react_devtools_backend.js:9413</span></div>
  <div class="a" style="left:16px;top:2236px;width:2400px;height:2px;background:#3a3b3e;"></div>
  <div class="a nw ct" style="left:110px;top:2249.4px;"><span style="color:#d5d8dc">Location:</span></div>
  <svg class="a" style="left:282px;top:2258.5px" width="14" height="17"><path d="M0 0L14 8.5L0 17Z" fill="#9aa0a6"/></svg>
  <div class="a nw ct" style="left:301px;top:2249.4px;"><i><span style="color:#e8eaed">{</span><span style="color:#9aa0a6">fileName</span><span style="color:#e8eaed">: </span><span style="color:#5fd4c0">'/Users/flaviocopes/dev/spreadsheet/src/App.jsx'</span><span style="color:#e8eaed">, </span><span style="color:#9aa0a6">lineNumber</span><span style="color:#e8eaed">: </span><span style="color:#9980ff">4</span><span style="color:#e8eaed">, </span><span style="color:#9aa0a6">columnNumber</span><span style="color:#e8eaed">: </span><span style="color:#9980ff">7</span><span style="color:#e8eaed">}</span></i></div>
  <div class="a nw ct" style="left:1848px;top:2244.2px;text-decoration:underline;text-underline-offset:4px;"><span style="color:#9aa0a6">react_devtools_backend.js:9417</span></div>
  <div class="a" style="left:16px;top:2291px;width:2400px;height:2px;background:#3a3b3e;"></div>
  <div class="a nw ct" style="left:110px;top:2298.7px;"><span style="color:#d5d8dc">Right-click any value to save it as a global variable for further inspection.</span></div>
  <div class="a nw ct" style="left:1848px;top:2298.4px;text-decoration:underline;text-underline-offset:4px;"><span style="color:#9aa0a6">react_devtools_backend.js:9421</span></div>
  <div class="a" style="left:16px;top:2337px;width:2400px;height:2px;background:#3a3b3e;"></div>
  <!-- /CONSOLE -->

</div>
<svg class="a" style="left:2200px;top:500px" width="180" height="360" viewBox="2200 500 180 360">
  <defs><filter id="ash" x="-50%" y="-20%" width="200%" height="140%"><feGaussianBlur in="SourceAlpha" stdDeviation="9"/><feOffset dx="4" dy="4" result="b"/><feComponentTransfer><feFuncA type="linear" slope="0.7"/></feComponentTransfer><feMerge><feMergeNode/><feMergeNode in="SourceGraphic"/></feMerge></filter></defs>
  <g filter="url(#ash)"><path d="M2258 549.2L2269.7 547.7L2307.8 744.3L2325.1 740.5L2306.6 811.9L2267.9 749.8L2284.7 748.9Z" fill="#fff" stroke="#fff" stroke-width="13" stroke-linejoin="round"/></g>
  <path d="M2258 549.2L2269.7 547.7L2307.8 744.3L2325.1 740.5L2306.6 811.9L2267.9 749.8L2284.7 748.9Z" fill="#e83022"/>
</svg>
<svg class="a" style="left:40px;top:2354px" width="8" height="5"><path d="M0 5L4 0L8 5Z" fill="#4a80e8"/></svg>
</body></html>
